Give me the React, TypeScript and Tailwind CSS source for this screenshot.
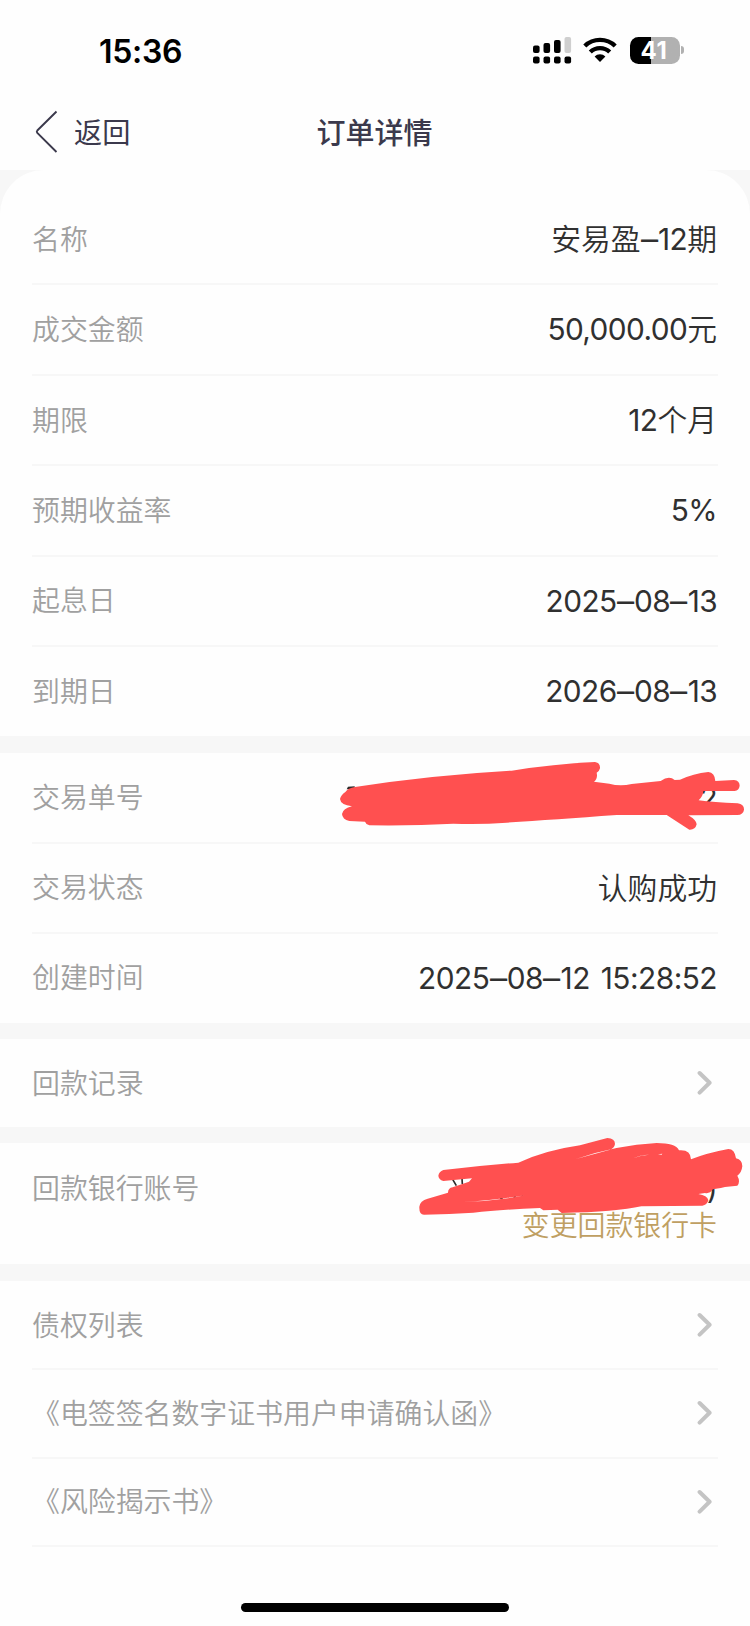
import type { ReactNode } from "react";

const LATIN_CJK = "font-['Inter','Noto_Sans_CJK_SC',sans-serif]";

function Chevron() {
  return (
    <svg className="mr-[5px] h-[26px] w-[16px]" viewBox="0 0 16 26" fill="none">
      <path d="M2.6 3 L12.6 12.8 L2.6 22.6" stroke="#c4c4c4" strokeWidth="4" strokeLinejoin="round" strokeLinecap="round" />
    </svg>
  );
}

function Row({ label, children, size = "h-[90.4px]", line = true }: { label: string; children?: ReactNode; size?: string; line?: boolean }) {
  return (
    <div className={`relative flex items-center justify-between ${size}`}>
      <span className="pt-[3px] text-[27.9px] leading-none font-[350] whitespace-nowrap text-[#a0a0a0]">{label}</span>
      {children}
      {line && <i className="absolute inset-x-0 -bottom-px h-[2px] bg-[#f7f7f7]" />}
    </div>
  );
}

function Value({ text, tracking = "tracking-[-0.58px]" }: { text: string; tracking?: string }) {
  return (
    <span className="pt-[1.5px] pr-px text-[29.8px] leading-none font-[350] whitespace-nowrap text-[#303030]">
      {text.split(/([\d.,:%) ]+|–)/).map((part, i) => {
        if (part === "–") {
          return (
            <span key={i} className="mx-[1.3px] inline-block scale-x-115 font-normal">–</span>
          );
        }
        if (/^[\d.,:%) ]+$/.test(part)) {
          return (
            <span key={i} className={`font-normal [word-spacing:3px] ${tracking}`}>{part}</span>
          );
        }
        return part;
      })}
    </span>
  );
}

function StatusBar() {
  return (
    <div className="flex h-[96px] items-start justify-between pr-[66px] pl-[99px]">
      <div className="mt-[35px] text-[32px] leading-[34px] font-semibold tracking-[-0.3px] text-black">15:36</div>
      <div className="mt-[37px] flex">
        <svg className="h-[27px] w-[39px]" viewBox="0 0 39 27">
          <rect x="0" y="8.5" width="6.6" height="7.5" rx="2" />
          <rect x="10.5" y="6" width="6.6" height="10" rx="2" />
          <rect x="21" y="3" width="6.6" height="13" rx="2" />
          <rect x="31.5" y="0" width="6.6" height="16" rx="2" fill="#cfcfcf" />
          <rect x="0" y="19.5" width="6.6" height="7" rx="2" />
          <rect x="10.5" y="19.5" width="6.6" height="7" rx="2" />
          <rect x="21" y="19.5" width="6.6" height="7" rx="2" />
          <rect x="31.5" y="19.5" width="6.6" height="7" rx="2" />
        </svg>
        <svg className="ml-[11.5px] h-[27px] w-[34px]" viewBox="0 0 34 27" fill="none" stroke="#000" strokeWidth="4.4">
          <path d="M1.8 9 A22 22 0 0 1 32.2 9" />
          <path d="M7.3 15 A14 14 0 0 1 26.7 15" />
          <path d="M17 25 L11.6 19.6 A7.6 7.6 0 0 1 22.4 19.6 Z" fill="#000" stroke="none" />
        </svg>
        <div className="ml-[12.5px] flex h-[26.5px] w-[50px] items-center justify-center rounded-[8.5px] bg-linear-to-r from-black from-[21px] to-[#b1b1b1] to-[21px] pr-[1px]">
          <span className="pt-px text-[24px] leading-[26px] font-bold tracking-[0.6px] text-white">41</span>
        </div>
        <div className="mt-[9px] ml-[1.5px] h-[8px] w-[3px] rounded-r-full bg-[#b1b1b1]" />
      </div>
    </div>
  );
}

function Gap() {
  return <div className="h-[16.5px] shrink-0 bg-[#f7f7f7]" />;
}

export default function App() {
  return (
    <div className={`relative flex h-[1626px] w-[750px] flex-col overflow-hidden bg-[#fefefe] ${LATIN_CJK}`} lang="zh-CN">
      <StatusBar />
      <header className="relative flex h-[74px] items-start pl-[35px] text-[#3b394c]">
        <svg className="mt-[14px] h-[44px] w-[24px]" viewBox="0 0 24 44" fill="none">
          <path d="M21.5 1.5 L2.3 20.5 Q1.3 21.7 2.3 22.9 L21.5 42" stroke="#3b394c" strokeWidth="1.9" />
        </svg>
        <span className="mt-[23px] ml-[15px] text-[28.2px] leading-none font-normal">返回</span>
        <h1 className="absolute inset-x-0 top-[23px] pr-px text-center text-[29px] leading-none font-medium">订单详情</h1>
      </header>

      <div className="bg-[#f7f7f7]">
        <section className="rounded-t-[44px] bg-[#fefefe] px-[32px] pt-[24px]">
          <Row label="名称"><Value text="安易盈–12期" /></Row>
          <Row label="成交金额"><Value text="50,000.00元" /></Row>
          <Row label="期限"><Value text="12个月" /></Row>
          <Row label="预期收益率"><Value text="5%" /></Row>
          <Row label="起息日"><Value text="2025–08–13" /></Row>
          <Row label="到期日" line={false}><Value text="2026–08–13" /></Row>
        </section>
      </div>
      <Gap />
      <section className="px-[32px]">
        <Row label="交易单号" size="h-[90px]"><Value text="2" /></Row>
        <Row label="交易状态" size="h-[90px]"><Value text="认购成功" /></Row>
        <Row label="创建时间" size="h-[90px]" line={false}><Value text="2025–08–12 15:28:52" tracking="tracking-[-0.5px]" /></Row>
      </section>
      <Gap />
      <section className="px-[32px]">
        <Row label="回款记录" size="h-[87.5px]" line={false}><Chevron /></Row>
      </section>
      <Gap />
      <section className="h-[121px] px-[32px]">
        <Row label="回款银行账号" size="h-[90px]" line={false}><Value text=")" /></Row>
        <div className="-mt-[20.5px] pr-px text-right text-[27.9px] leading-none font-[350] text-[#bf9f62]">变更回款银行卡</div>
      </section>
      <Gap />
      <section className="px-[32px]">
        <Row label="债权列表" size="h-[88.4px]"><Chevron /></Row>
        <Row label="《电签签名数字证书用户申请确认函》" size="h-[88.4px]"><Chevron /></Row>
        <Row label="《风险揭示书》" size="h-[88.4px]"><Chevron /></Row>
      </section>

      <svg className="absolute top-[730px] left-[320px] h-[120px] w-[430px]" viewBox="0 0 1290 360">
        <path d="M80 178 L84 170 L104 169 L104 178Z" fill="#2b2b2b" />
        <path
          fill="#ff5050"
          d="M76 186 Q84 174 105 171 Q340 135 575 122 Q700 102 825 96 Q841 98 840 115 Q838 124 830 128 Q834 146 822 155 L868 161 Q900 170 935 162 L1022 153 Q1047 135 1064 150 L1080 149 Q1120 131 1165 126 Q1184 127 1186 153 L1242 150 Q1259 152 1259 167 Q1257 181 1244 183 L1150 183 Q1149 199 1136 211 Q1180 217 1253 220 Q1273 224 1272 239 Q1270 254 1252 255 L1105 256 Q1129 270 1130 283 Q1126 300 1108 299 L1040 255 L890 255 Q700 269 560 278 Q480 284 400 281 Q280 288 148 286 Q138 284 135 275 L88 273 Q67 268 66 252 Q69 235 96 229 Q62 225 60 207 Q63 195 76 186Z"
        />
      </svg>
      <svg className="absolute top-[1120px] left-[400px] h-[160px] w-[350px]" viewBox="0 0 1050 480">
        <path d="M158 178 L169 197 M186 175 L187 192 M300 234 L308 237 M342 234 L346 228 M365 230 L369 225 M878 224 L890 221" stroke="#2b2b2b" strokeWidth="5" />
        <path
          fill="#ff5050"
          fillRule="evenodd"
          d="M130 150 Q240 137 355 128 Q440 90 540 76 L622 54 Q645 55 645 72 Q643 85 630 89 L528 117 Q650 75 770 69 Q827 69 837 91 Q872 88 873 118 Q920 99 985 87 Q1004 87 1008 115 Q1027 119 1027 139 Q1025 158 1012 167 Q1022 185 1012 197 L975 201 Q948 207 938 208 Q930 222 915 219 L895 222 Q922 226 925 241 Q921 256 907 257 L724 259 Q650 276 485 279 L473 269 L430 271 L420 264 Q300 269 220 278 Q150 283 72 284 Q57 284 58 260 Q60 242 83 236 L144 218 Q144 204 158 202 L207 185 L216 175 L130 183 Q116 179 115 167 Q117 155 130 150Z M183 246 Q280 244 376 226 Q305 237 225 244Z M699 115 Q720 105 748 104 Q725 105 699 115Z M774 103 L787 101 L785 104Z"
        />
      </svg>
      <div className="absolute bottom-[14px] left-[241px] h-[9px] w-[268px] rounded-full bg-black" />
    </div>
  );
}
